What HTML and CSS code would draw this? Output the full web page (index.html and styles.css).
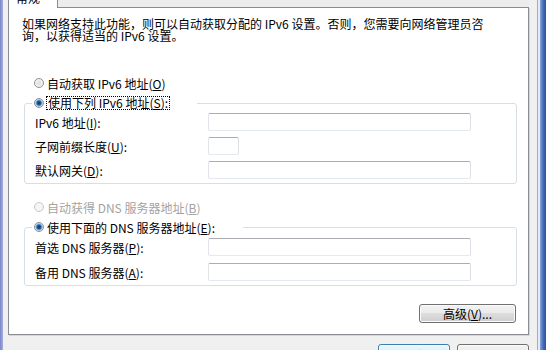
FILE: index.html
```html
<!DOCTYPE html>
<html lang="zh-CN">
<head>
    <meta charset="UTF-8">
    <title>Internet 协议版本 6 (TCP/IPv6) 属性</title>
    <link rel="stylesheet" href="styles.css">
</head>
<body>
    <div class="frame-left"></div>

    <div class="dialog">
        <div class="tabs">
            <div class="tab">常规</div>
        </div>

        <div class="panel">
            <p class="desc">如果网络支持此功能，则可以自动获取分配的 IPv6 设置。否则，您需要向网络管理员咨<br>询，以获得适当的 IPv6 设置。</p>

            <div class="opt opt-first">
                <span class="radio"></span>
                <span>自动获取 IPv6 地址(<u>O</u>)</span>
            </div>

            <fieldset class="group">
                <legend class="legend-ip">
                    <div class="opt">
                        <span class="radio checked"></span>
                        <span class="focus">使用下列 IPv6 地址(<u>S</u>):</span>
                    </div>
                </legend>
                <div class="row">
                    <label>IPv6 地址(<u>I</u>):</label>
                    <input class="field" type="text">
                </div>
                <div class="row">
                    <label>子网前缀长度(<u>U</u>):</label>
                    <input class="field short" type="text">
                </div>
                <div class="row">
                    <label>默认网关(<u>D</u>):</label>
                    <input class="field" type="text">
                </div>
            </fieldset>

            <div class="opt opt-dns disabled">
                <span class="radio"></span>
                <span>自动获得 DNS 服务器地址(<u>B</u>)</span>
            </div>

            <fieldset class="group group-dns">
                <legend class="legend-dns">
                    <div class="opt">
                        <span class="radio checked"></span>
                        <span>使用下面的 DNS 服务器地址(<u>E</u>):</span>
                    </div>
                </legend>
                <div class="row">
                    <label>首选 DNS 服务器(<u>P</u>):</label>
                    <input class="field" type="text">
                </div>
                <div class="row">
                    <label>备用 DNS 服务器(<u>A</u>):</label>
                    <input class="field" type="text">
                </div>
            </fieldset>

            <div class="actions">
                <button class="btn btn-advanced">高级(<u>V</u>)...</button>
            </div>
        </div>

        <div class="footer">
            <button class="btn btn-default">确定</button>
            <button class="btn">取消</button>
        </div>
    </div>

    <div class="frame-right"></div>
</body>
</html>
```

FILE: styles.css
```css
/* Whole window, clipped to the screenshot */
body {
    margin: 0;
    height: 350px;
    overflow: hidden;
    display: flex;
    background-color: #f0f0f0;
    font-family: "Noto Sans CJK SC", sans-serif;
    font-size: 12px;
    color: #000;
}

/* Aero window borders */
.frame-left {
    width: 3px;
    background: linear-gradient(to right, #7c86c8, #a4aee0);
}

.frame-right {
    width: 9px;
    background: linear-gradient(to right, #a9acb3 0, #a9acb3 1px, #e4ecf8 1px, #e4ecf8 3px, #88a6dc 3px, #4a6fb8 6px, #2d4f9c 9px);
}

.dialog {
    flex: 1;
    padding: 0 8px 0 5px;
}

/* Tab strip, only the bottom of the tab is visible */
.tabs {
    height: 7px;
    display: flex;
    align-items: flex-end;
    background-color: #ececec;
}

.tab {
    position: relative;
    z-index: 1;
    width: 50px;
    height: 20px;
    margin-bottom: -1px;
    box-sizing: border-box;
    padding: 0 0 3px 7px;
    display: flex;
    align-items: flex-end;
    line-height: 14px;
    background-color: #fff;
    border: 1px solid #898c95;
    border-bottom: none;
}

.panel {
    background-color: #fff;
    border: 1px solid #898c95;
    box-shadow: 1px 1px 0 #d6d6d6;
    padding-bottom: 11px;
}

.desc {
    margin: 10px 0 0 13px;
    line-height: 12px;
    white-space: nowrap;
}

/* Radio options */
.opt {
    display: flex;
    align-items: center;
    height: 16px;
    white-space: nowrap;
}

.opt-first {
    margin: 33px 0 0 25px;
}

.opt-dns {
    margin: 15px 0 0 25px;
}

.disabled {
    color: #a3a3a3;
}

.radio {
    width: 10px;
    height: 10px;
    margin-right: 3px;
    box-sizing: border-box;
    border-radius: 50%;
    border: 1px solid #8e8f8f;
    background: radial-gradient(circle, #dcdcdc 0, #fbfbfb 5px);
}

.radio.checked {
    background: radial-gradient(circle, #0d2f5c 0, #1f5fa6 2px, #7fb2e2 3px, #e8e8e8 4px);
}

.disabled .radio {
    border-color: #c9c9c9;
    background: #f5f5f5;
}

.focus {
    margin-left: -1px;
    padding: 0 1px;
    line-height: 12px;
    border: 1px dotted #000;
}

/* Group boxes */
.group {
    margin: 4px 11px 0 15px;
    padding: 1px 0 3px 7px;
    border: 1px solid #d5dfe5;
    border-radius: 3px;
    min-inline-size: 0;
}

.group-dns {
    padding-top: 2px;
}

.group legend {
    padding: 0 0 0 2px;
    height: 16px;
    box-sizing: border-box;
}

.legend-ip {
    width: 165px;
}

.legend-dns {
    width: 211px;
}

.row {
    display: flex;
    align-items: center;
    height: 20px;
    margin-left: 3px;
}

.row + .row {
    margin-top: 4px;
}

.group-dns .row + .row {
    margin-top: 5px;
}

.row label {
    width: 173px;
    white-space: nowrap;
}

.field {
    width: 263px;
    height: 18px;
    margin: 0;
    padding: 0 2px;
    box-sizing: border-box;
    border: 1px solid;
    border-color: #abadb3 #dbdfe6 #e3e9ef #e2e3ea;
    border-radius: 2px;
    background-color: #fff;
}

.field.short {
    width: 31px;
}

/* Buttons */
.btn {
    margin: 0;
    padding: 0;
    height: 22px;
    box-sizing: border-box;
    font-family: "Noto Sans CJK SC", sans-serif;
    font-size: 12px;
    color: #000;
    border: 1px solid #707070;
    border-radius: 3px;
    background: linear-gradient(#f2f2f2 0, #ebebeb 50%, #dddddd 50%, #cfcfcf 100%);
    box-shadow: inset 0 0 0 1px #fbfbfb;
}

.actions {
    display: flex;
    justify-content: flex-end;
    margin-top: 18px;
    padding-right: 12px;
}

.btn-advanced {
    width: 97px;
    height: 19px;
    line-height: 15px;
}

.footer {
    display: flex;
    justify-content: flex-end;
    gap: 7px;
    margin-top: 9px;
}

.footer .btn {
    width: 72px;
}

.btn-default {
    border-color: #3c7fb1;
    background: linear-gradient(#eaf6fd 0, #d9f0fc 50%, #bee6fd 50%, #a7d9f5 100%);
}
```
